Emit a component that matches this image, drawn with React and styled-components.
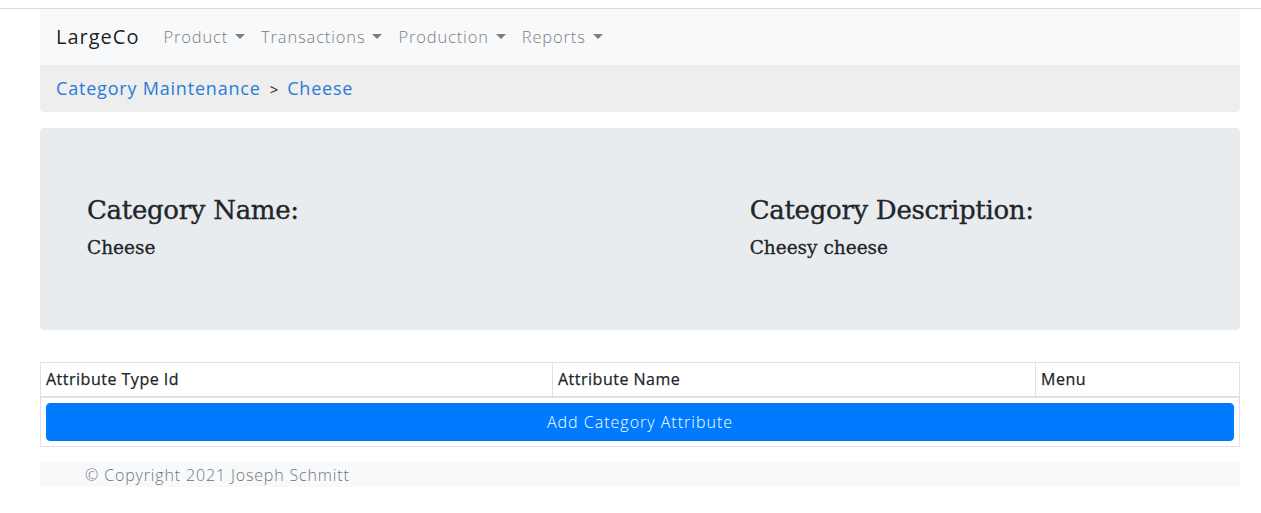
import React from "react";
import styled, { createGlobalStyle } from "styled-components";

const Global = createGlobalStyle`
  html, body { margin: 0; padding: 0; background: #fff; }
  body {
    border-top: 1px solid #dcdcdc;
    margin-top: 8px;
    font-family: "Open Sans", "DejaVu Sans", sans-serif;
    font-size: 16px;
    line-height: 1.5;
    color: #212529;
  }
  * { box-sizing: border-box; }
`;

const Container = styled.div`
  width: 1200px;
  margin-left: 40px;
`;

const Navbar = styled.nav`
  display: flex;
  align-items: center;
  height: 56px;
  padding: 8px 16px;
  background: #f8f9fa;
`;

const Brand = styled.span`
  font-size: 20px;
  line-height: 30px;
  letter-spacing: 1px;
  margin-right: 16px;
  color: rgba(0, 0, 0, 0.9);
`;

const NavLink = styled.span`
  display: inline-flex;
  align-items: center;
  padding: 8px;
  font-size: 16.5px;
  font-weight: 300;
  letter-spacing: 0.85px;
  color: #7d7e7f;
  &::after {
    content: "";
    display: inline-block;
    margin: -2px 0 0 7px;
    border-top: 5px solid #7d7e7f;
    border-left: 5px solid transparent;
    border-right: 5px solid transparent;
  }
`;

const Breadcrumb = styled.ol`
  display: flex;
  list-style: none;
  margin: 0 0 16px;
  padding: 11px 16px;
  background: #eeeeee;
  border-radius: 0 0 4px 4px;
  font-size: 18px;
  line-height: 24px;
`;

const Crumb = styled.li`
  color: #2b7ad6;
  letter-spacing: 0.8px;
  & + &::before {
    content: ">";
    color: #212529;
    font-size: 15px;
    letter-spacing: 0;
    padding: 0 9px;
  }
`;

const Jumbotron = styled.section`
  background: #e9ecef;
  border-radius: 4px;
  padding: 66px 32px 62px;
  margin-bottom: 32px;
  display: grid;
  grid-template-columns: 7fr 5fr;
`;

const Col = styled.div`
  padding: 0 15px;
`;

const Heading = styled.h3`
  margin: 0 0 8px;
  font-family: "DejaVu Serif", serif;
  font-weight: 400;
  font-size: 26px;
  letter-spacing: -0.3px;
  line-height: 33.6px;
  color: #212529;
  -webkit-text-stroke: 0.35px #212529;
`;

const Value = styled.h5`
  margin: 0 0 8px;
  font-family: "DejaVu Serif", serif;
  font-weight: 400;
  font-size: 18.5px;
  line-height: 24px;
  color: #212529;
  -webkit-text-stroke: 0.3px #212529;
`;

const Table = styled.table`
  width: 100%;
  border-collapse: collapse;
  border: 1px solid #dee2e6;
  margin-bottom: 16px;
`;

const Th = styled.th`
  text-align: left;
  font-weight: 400;
  letter-spacing: 0.5px;
  padding: 4px 5px 5px;
  border: 1px solid #dee2e6;
  border-bottom-width: 2px;
  -webkit-text-stroke: 0.25px #212529;
  width: ${(p) => p.$w};
`;

const Td = styled.td`
  padding: 5px;
`;

const Button = styled.button`
  display: block;
  width: 100%;
  height: 38px;
  border: 1px solid #007bff;
  background: #007bff;
  color: #fff;
  border-radius: 4px;
  font-family: inherit;
  font-size: 16px;
  font-weight: 300;
  letter-spacing: 1px;
  line-height: 24px;
  padding: 6px 12px;
`;

const Footer = styled.footer`
  background: #f8f9fa;
  color: #6c757d;
  font-weight: 300;
  letter-spacing: 0.85px;
  line-height: 24px;
  padding-left: 45px;
`;

export default function App() {
  return (
    <>
      <Global />
      <Container>
        <Navbar>
          <Brand>LargeCo</Brand>
          <NavLink>Product</NavLink>
          <NavLink>Transactions</NavLink>
          <NavLink>Production</NavLink>
          <NavLink>Reports</NavLink>
        </Navbar>
        <Breadcrumb>
          <Crumb>Category Maintenance</Crumb>
          <Crumb>Cheese</Crumb>
        </Breadcrumb>
        <Jumbotron>
          <Col>
            <Heading>Category Name:</Heading>
            <Value>Cheese</Value>
          </Col>
          <Col>
            <Heading>Category Description:</Heading>
            <Value>Cheesy cheese</Value>
          </Col>
        </Jumbotron>
        <Table>
          <thead>
            <tr>
              <Th $w="512px">Attribute Type Id</Th>
              <Th $w="483px">Attribute Name</Th>
              <Th>Menu</Th>
            </tr>
          </thead>
          <tbody>
            <tr>
              <Td colSpan={3}>
                <Button>Add Category Attribute</Button>
              </Td>
            </tr>
          </tbody>
        </Table>
        <Footer>© Copyright 2021 Joseph Schmitt</Footer>
      </Container>
    </>
  );
}
